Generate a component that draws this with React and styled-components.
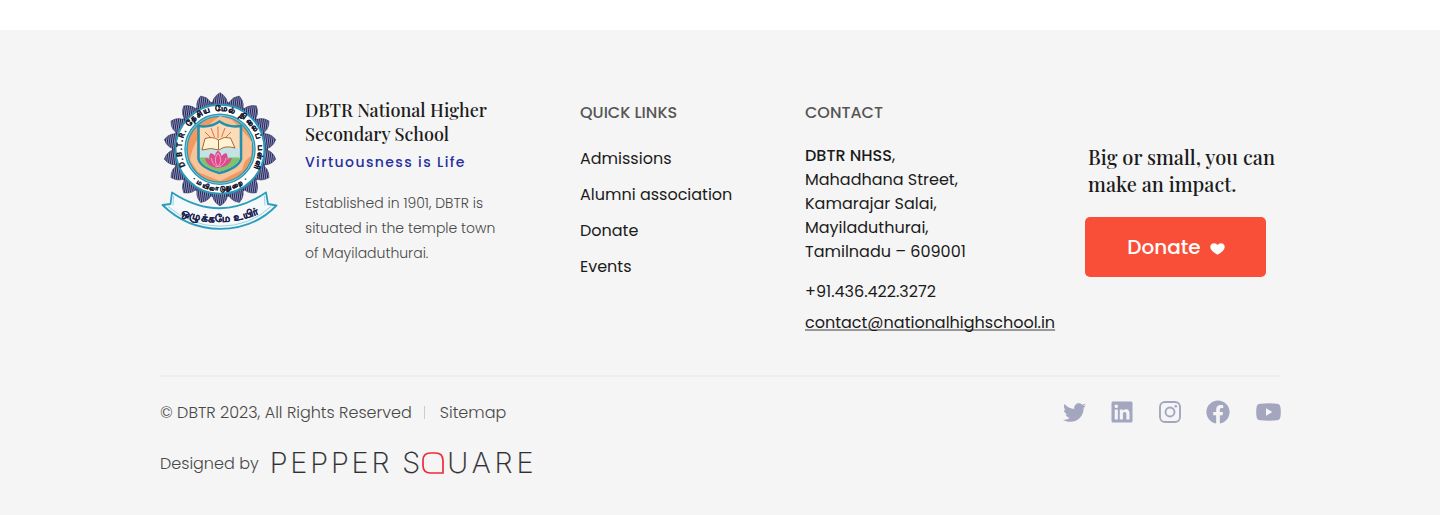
import React from "react";
import styled, { createGlobalStyle } from "styled-components";
import { FaTwitter, FaLinkedin, FaFacebook } from "react-icons/fa";

const sans = `Poppins, Inter, "Noto Sans", sans-serif`;
const serif = `"Playfair Display", "Liberation Serif", serif`;

const Global = createGlobalStyle`
  * { box-sizing: border-box; }
  body { margin: 0; background: #fff; font-family: ${sans}; color: #1b1b1b; }
  h2, h3, p, ul, address { margin: 0; padding: 0; font-style: normal; }
  ul { list-style: none; }
  a { color: inherit; text-decoration: none; }
`;

const Footer = styled.footer`
  margin-top: 30px;
  height: 485px;
  background: #f5f5f5;
`;
const Container = styled.div`
  width: 1120px;
  margin: 0 auto;
`;
const Columns = styled.div`
  display: grid;
  grid-template-columns: 420px 225px 280px 195px;
  height: 347px;
  padding-top: 60px;
  border-bottom: 2px solid #eee;
`;
const About = styled.section`
  display: flex;
  gap: 27px;
`;
const AboutText = styled.div`
  padding-top: 8px;
`;
const SchoolName = styled.h2`
  font: 500 18px/24px ${serif};
`;
const Motto = styled.p`
  margin-top: 4px;
  font-size: 14px;
  font-weight: 500;
  line-height: 24px;
  letter-spacing: 1.4px;
  color: #272f9f;
`;
const Blurb = styled.p`
  margin-top: 17px;
  font-size: 14px;
  font-weight: 300;
  line-height: 25px;
  color: #484848;
`;
const Column = styled.section`
  padding-top: 11px;
`;
const Heading = styled.h3`
  font-size: 16px;
  font-weight: 500;
  line-height: 24px;
  color: #555;
`;
const Links = styled.ul`
  display: grid;
  gap: 12px;
  margin-top: 22px;
  font-size: 16px;
  line-height: 24px;
`;
const Address = styled.address`
  margin-top: 19px;
  font-size: 16px;
  line-height: 24px;
  b { font-weight: 500; }
`;
const Phone = styled.p`
  margin-top: 16px;
  line-height: 24px;
`;
const Email = styled.a`
  display: inline-block;
  margin-top: 7px;
  line-height: 24px;
  text-decoration: underline 2px #999;
  text-underline-offset: 1px;
  text-decoration-skip-ink: none;
`;
const Appeal = styled.section`
  padding-top: 53px;
`;
const AppealText = styled.p`
  padding-left: 3px;
  font: 500 20px/27px ${serif};
  white-space: nowrap;
`;
const DonateButton = styled.a`
  display: flex;
  align-items: center;
  justify-content: center;
  gap: 9px;
  width: 181px;
  height: 60px;
  margin-top: 20px;
  padding-left: 1px;
  border-radius: 5px;
  background: #f94f38;
  color: #fff;
  font-size: 20px;
  font-weight: 500;
  svg { margin-top: 3px; }
`;
const Bottom = styled.div`
  display: flex;
  justify-content: space-between;
  align-items: center;
  height: 36px;
  margin-top: 17px;
`;
const Legal = styled.div`
  display: flex;
  align-items: center;
  font-size: 16px;
  font-weight: 300;
  color: #484848;
`;
const Separator = styled.span`
  width: 1px;
  height: 13px;
  margin: 0 15px 0 12px;
  background: #ccc;
`;
const Social = styled.div`
  display: flex;
  align-items: center;
  gap: 25px;
  margin-right: -1px;
  color: #a4a6c0;
  a { display: flex; }
  a:first-child { margin-right: -1px; }
  a:last-child { margin-left: 1px; }
`;
const Credit = styled.div`
  display: flex;
  align-items: center;
  height: 36px;
  margin-top: 15px;
  font-size: 16px;
  font-weight: 300;
  color: #484848;
`;
const Wordmark = styled.div`
  display: flex;
  align-items: center;
  margin-left: 11px;
  font: 200 28.8px/36px Inter, sans-serif;
  color: #303032;
  -webkit-text-stroke: 0.2px #303032;
  svg { margin-left: 2px; }
`;
const Letters = styled.span`
  letter-spacing: ${(p) => p.$spacing}px;
  margin-left: ${(p) => p.$offset || 0}px;
`;

const polar = (r, deg) => {
  const a = (deg * Math.PI) / 180;
  return [60 + r * Math.sin(a), 59.3 - r * Math.cos(a)].map((n) => n.toFixed(2)).join(" ");
};
const petal = (a) =>
  `M${polar(43, a - 10)} Q${polar(52.5, a - 9.5)} ${polar(56.6, a)} Q${polar(52.5, a + 9.5)} ${polar(43, a + 10)}Z`;

const Crest = () => (
  <svg width="118" height="142" viewBox="0 0 118 142">
    <defs>
      <pattern id="stripe" width="2" height="4" patternUnits="userSpaceOnUse" patternTransform="rotate(8)">
        <rect width="2" height="4" fill="#b4b9d8" />
        <rect width="1.25" height="4" fill="#22245a" />
      </pattern>
      <path id="ringTop" d="M26.5 78 A38.3 38.3 0 1 1 93.5 78" />
      <path id="ringBottom" d="M26 83 A41.4 41.4 0 0 0 94 83" />
      <path id="ribbonText" d="M17 123.5 Q60 141 101 123" />
    </defs>
    <circle cx="60" cy="59.3" r="48" fill="url(#stripe)" />
    {Array.from({ length: 18 }, (_, i) => (
      <path key={i} d={petal(i * 20)} fill="url(#stripe)" stroke="#33366b" strokeWidth=".6" />
    ))}
    <circle cx="60" cy="59.3" r="44.5" fill="#fff" stroke="#2c96b4" strokeWidth="2" />
    <circle cx="60" cy="59.3" r="34" fill="#f29a5e" stroke="#2c96b4" strokeWidth="3.4" />
    <circle cx="60" cy="59.3" r="34" fill="none" stroke="#9fd8e4" strokeWidth=".8" />
    <path d="M60 26 L72 30 Q86 44 92 52 L91 66 Q84 70 82 80 L60 91 L38 82 L30 70 Q34 44 60 26Z" fill="#f7c49a" />
    <g fontFamily="Noto Sans, sans-serif" fontWeight="700" fill="#15172f" stroke="#15172f" strokeWidth=".3">
      <text fontSize="7.8">
        <textPath href="#ringTop" startOffset="2" textLength="157">D.B.T.R. தேசிய மேல் நிலைப் பள்ளி</textPath>
      </text>
      <text fontSize="6.6">
        <textPath href="#ringBottom" startOffset="9" textLength="61">· மயிலாடுதுறை ·</textPath>
      </text>
    </g>
    <path d="M38.5 36 Q50 38 59.5 31.5 Q69 38 81 36 V69 Q78 78 59.5 83 Q41 78 38.5 69Z" fill="#fbdcb8" stroke="#2490ae" strokeWidth="2.6" />
    <path d="M40 58 H79.5 V68 H40Z" fill="#c3e3e4" />
    <path d="M40 67.5 H79.5 V69 Q77 77 59.5 81.6 Q42 77 40 69Z" fill="#7fc26c" />
    <path d="M58 48V36.5 M54.5 47L51 38 M61.5 47L65 38 M51 48L45 42 M65 48L71 42" stroke="#ee6b3b" strokeWidth="1" />
    <path d="M42 60 L45 48.5 Q53 46 58.5 50 Q64 46 70.5 48 L75 58 Q65 55 59 60 Q51 57 42 60Z" fill="#fff3d4" stroke="#a0693f" strokeWidth="1" />
    <path d="M58.5 50V59.5" stroke="#a0693f" />
    <path d="M58 78 Q46 76.5 45 68 Q48 68 50 70 Q48 65 51 63 Q54 64 55 66 Q55.5 62 58 60.5 Q60.5 62 61.5 66 Q63 64 66 63 Q68.5 66 67 70 Q69 68 72 68 Q70 76.5 58 78Z" fill="#dd4a8d" />
    <path d="M58 77 Q52.5 70 58 63 Q63.5 70 58 77 M51.5 68 Q52 74 57 77 M66 68 Q65 74 59 77" fill="none" stroke="#f3a3c6" strokeWidth="1" />
    <g fill="#f6f9fb" stroke="#2c9dbd" strokeWidth="1.8" strokeLinejoin="round">
      <path d="M12 102.5 L10.5 114 L2.5 115 Q27 138.8 60 138.8 Q94 138.8 116.5 115.5 L108 114 L106 102.5 Q60 134 12 102.5Z" />
      <path d="M13.5 106 L13 115.5 M104.5 106 L105 115.5 M8 116.5 Q31 136.2 60 136.2 Q90 136.2 111 116.5" fill="none" stroke="#8ccfdf" strokeWidth=".9" />
    </g>
    <text fontFamily="Noto Sans, sans-serif" fontWeight="700" fontSize="10.2" fill="#1d1f4f" stroke="#1d1f4f" strokeWidth=".2">
      <textPath href="#ribbonText" startOffset="4" textLength="80">ஒழுக்கமே உயிர்</textPath>
    </text>
  </svg>
);

const Heart = () => (
  <svg width="15" height="12" viewBox="0 0 15 12" fill="currentColor">
    <path d="M7.5 11.8 Q.3 8 .3 3.8 Q.6 .4 4 .3 Q6.5 .3 7.5 2 Q8.5 .3 11 .3 Q14.4 .4 14.7 3.8 Q14.7 8 7.5 11.8Z" />
  </svg>
);
const Instagram = () => (
  <svg width="22" height="22" viewBox="0 0 22 22" fill="none" stroke="currentColor" strokeWidth="1.9">
    <rect x="1" y="1" width="20" height="20" rx="5" />
    <circle cx="11" cy="11" r="4.5" />
    <circle cx="16.8" cy="5.2" r="1.3" fill="currentColor" stroke="none" />
  </svg>
);
const YouTube = () => (
  <svg width="25" height="18" viewBox="0 0 25 18">
    <path
      d="M4 .7 Q12.5 -.1 21 .7 Q24 1 24.4 4 Q25.2 9 24.4 14 Q24 17 21 17.3 Q12.5 18.1 4 17.3 Q1 17 .6 14 Q-.2 9 .6 4 Q1 1 4 .7Z M10 5.3 V12.7 L16.3 9Z"
      fill="currentColor"
      fillRule="evenodd"
    />
  </svg>
);
const SquareQ = () => (
  <svg width="22" height="22" viewBox="0 0 22 22" fill="none" stroke="#ee2b3b" strokeWidth="1.7">
    <path d="M21 21 H8.5 Q1 21 1 13.5 V8.5 Q1 1 8.5 1 H13.5 Q21 1 21 8.5Z" />
  </svg>
);

const links = ["Admissions", "Alumni association", "Donate", "Events"];

export default function App() {
  return (
    <>
      <Global />
      <Footer>
        <Container>
          <Columns>
            <About>
              <Crest />
              <AboutText>
                <SchoolName>DBTR National Higher<br />Secondary School</SchoolName>
                <Motto>Virtuousness is Life</Motto>
                <Blurb>Established in 1901, DBTR is<br />situated in the temple town<br />of Mayiladuthurai.</Blurb>
              </AboutText>
            </About>
            <Column>
              <Heading>QUICK LINKS</Heading>
              <Links>
                {links.map((label) => <li key={label}><a href="#">{label}</a></li>)}
              </Links>
            </Column>
            <Column>
              <Heading>CONTACT</Heading>
              <Address>
                <b>DBTR NHSS</b>,<br />Mahadhana Street,<br />Kamarajar Salai,<br />Mayiladuthurai,<br />Tamilnadu – 609001
              </Address>
              <Phone>+91.436.422.3272</Phone>
              <Email href="#">contact@nationalhighschool.in</Email>
            </Column>
            <Appeal>
              <AppealText>Big or small, you can<br />make an impact.</AppealText>
              <DonateButton href="#">Donate <Heart /></DonateButton>
            </Appeal>
          </Columns>
          <Bottom>
            <Legal>
              <span>© DBTR 2023, All Rights Reserved</span>
              <Separator />
              <a href="#">Sitemap</a>
            </Legal>
            <Social>
              <a href="#"><FaTwitter size={23} /></a>
              <a href="#"><FaLinkedin size={24} /></a>
              <a href="#"><Instagram /></a>
              <a href="#"><FaFacebook size={24} /></a>
              <a href="#"><YouTube /></a>
            </Social>
          </Bottom>
          <Credit>
            Designed by
            <Wordmark>
              <Letters $spacing={2.9}>PEPPER</Letters>
              <Letters $spacing={0} $offset={10}>S</Letters>
              <SquareQ />
              <Letters $spacing={4} $offset={3}>UARE</Letters>
            </Wordmark>
          </Credit>
        </Container>
      </Footer>
    </>
  );
}
